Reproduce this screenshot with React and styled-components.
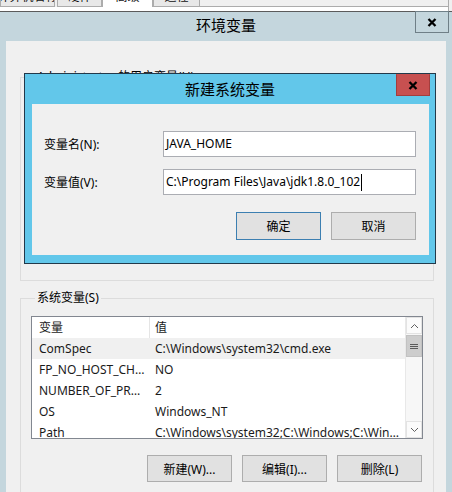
import React from 'react';
import styled, { createGlobalStyle } from 'styled-components';

const GlobalStyle = createGlobalStyle`
  html, body { margin: 0; padding: 0; }
  body {
    width: 452px; height: 492px; overflow: hidden; background: #f0f0f0;
    font-family: "Noto Sans", "Noto Sans CJK SC", sans-serif; font-size: 12px; color: #000;
  }
  * { box-sizing: border-box; }
`;

const Page = styled.div`
  width: 452px; height: 492px; overflow: hidden; position: relative;
  display: flex; flex-direction: column;
`;

const TabStrip = styled.div`
  display: flex; height: 7px; flex-shrink: 0; background: #f0f0f0;
`;

const Tab = styled.div`
  width: ${p => p.w}px; margin-right: ${p => p.gap || 0}px; height: 7px; overflow: hidden;
  background: ${p => (p.active ? '#ffffff' : '#e8e8e8')};
  border: 1px solid #acacac; border-top: none;
  border-bottom: ${p => (p.active ? 'none' : '1px solid #acacac')};
  display: flex; justify-content: center; align-items: flex-start;
`;

const TabLabel = styled.span`
  margin-top: -10px; line-height: 14px; font-size: 12px; color: #111; white-space: nowrap;
`;

const TabFill = styled.div`
  flex: 1; height: 7px; border-bottom: 1px solid #acacac; border-right: 1px solid #acacac; margin-right: 3px;
`;

const TabPanel = styled.div`
  height: 4px; flex-shrink: 0; background: #fff; margin-right: 3px; border-right: 1px solid #acacac;
`;

const Window = styled.div`
  flex: 1; display: flex; flex-direction: column; min-height: 0;
  background: #c4d6dd; border-top: 1px solid #5b5b5b;
`;

const TitleBar = styled.div`
  display: grid; grid-template-columns: 1fr auto 1fr; align-items: start;
  height: ${p => p.h}px; flex-shrink: 0;
`;

const Title = styled.div`
  grid-column: 2; font-size: 15px; line-height: ${p => p.lh}px; color: #000; white-space: nowrap;
`;

const CloseBtn = styled.div`
  grid-column: 3; justify-self: end;
  width: 34px; height: 22px; margin-top: ${p => p.mt || 0}px; margin-right: ${p => p.mr}px;
  display: flex; align-items: center; justify-content: center;
  background: ${p => (p.red ? '#c75050' : 'transparent')};
  border: 1px solid ${p => (p.red ? '#a33d3d' : '#6f7f87')};
  border-top-color: ${p => (p.red ? '#c75050' : '#6f7f87')};
`;

const Client = styled.div`
  flex: 1; min-height: 0; margin: 0 6px; background: #f0f0f0; padding-top: 28px;
  display: flex; flex-direction: column;
`;

const GroupBox = styled.fieldset`
  margin: ${p => p.mt || 0}px 12px 0 14px; border: 1px solid #dcdcdc; min-width: 0;
  padding: 10px 10px 0 10px; height: ${p => p.h}px; flex-shrink: 0;
`;

const Legend = styled.legend`
  margin-left: 4px; padding: 0 2px; font-size: 12px; line-height: 16px; color: #000;
`;

const ListView = styled.div`
  height: 123px; border: 1px solid #828790; background: #fff; display: flex; overflow: hidden;
`;

const ListBody = styled.div`
  flex: 1; min-width: 0; display: flex; flex-direction: column; overflow: hidden;
`;

const Row = styled.div`
  display: grid; grid-template-columns: 118px 1fr; height: 21px; flex-shrink: 0;
  background: ${p => (p.selected ? '#f0f0f0' : '#fff')};
`;

const Cell = styled.div`
  line-height: 21px; white-space: nowrap; overflow: hidden; text-overflow: ellipsis;
  padding-left: ${p => (p.first ? 7 : 5)}px; padding-right: 3px; color: #1a1a1a; font-size: 12px;
  border-right: ${p => (p.sep ? '1px solid #e5e5e5' : 'none')};
`;

const Scrollbar = styled.div`
  width: 17px; flex-shrink: 0; background: #f7f7f7; border-left: 1px solid #e8e8e8;
  display: flex; flex-direction: column;
`;

const ScrollArrow = styled.div`
  height: 17px; flex-shrink: 0; display: flex; align-items: center; justify-content: center;
  background: #fbfbfb; border: 1px solid #e3e3e3;
`;

const Thumb = styled.div`
  height: 22px; margin: 1px 0 0 0; background: #cdcdcd; border: 1px solid #c2c2c2;
  display: flex; align-items: center; justify-content: center; flex-shrink: 0;
`;

const Track = styled.div` flex: 1; `;

const ButtonRow = styled.div`
  display: flex; justify-content: flex-end; gap: ${p => p.gap}px;
  margin-top: ${p => p.mt}px; padding-right: ${p => p.pr || 0}px;
`;

const Button = styled.div`
  width: 85px; height: ${p => p.h || 27}px; background: #e1e1e1;
  border: 1px solid ${p => (p.primary ? '#3c7fb1' : '#adadad')};
  display: flex; align-items: center; justify-content: center; font-size: 12px; color: #000;
`;

const Dialog = styled.div`
  position: absolute; left: 24px; top: 73px; width: 412px; height: 191px;
  background: #62c7ea; border: 1px solid #22394a; display: flex; flex-direction: column;
`;

const DlgClient = styled.div`
  flex: 1; margin: 0 6px 8px 7px; background: #f0f0f0; padding: 27px 13px 0 12px;
  display: flex; flex-direction: column;
`;

const Form = styled.div`
  display: grid; grid-template-columns: 119px 1fr; row-gap: 12px; align-items: center;
`;

const Label = styled.div` font-size: 12px; color: #000; white-space: nowrap; `;

const Input = styled.div`
  height: 26px; border: 1px solid #abadb3; background: #fff; padding: 0 2px;
  line-height: 24px; font-size: 12px; color: #000; white-space: nowrap; overflow: hidden;
`;

const Caret = styled.span`
  display: inline-block; width: 1px; height: 17px; background: #000; vertical-align: middle; margin-left: 1px;
`;

const XIcon = () => (
  <svg width="10" height="9" viewBox="0 0 10 9">
    <path d="M1.5 1 L8.5 8 M8.5 1 L1.5 8" stroke="#000" strokeWidth="2.3" fill="none" />
  </svg>
);

const Chevron = ({ up }) => (
  <svg width="9" height="6" viewBox="0 0 9 6">
    <path d={up ? 'M1 5 L4.5 1.5 L8 5' : 'M1 1 L4.5 4.5 L8 1'} stroke="#606060" strokeWidth="1" fill="none" />
  </svg>
);

const Grip = () => (
  <svg width="8" height="7" viewBox="0 0 8 7">
    <path d="M0 1.5 H8 M0 3.5 H8 M0 5.5 H8" stroke="#5a5a5a" strokeWidth="1" />
  </svg>
);

const rows = [
  ['ComSpec', 'C:\\Windows\\system32\\cmd.exe', true],
  ['FP_NO_HOST_CHECK', 'NO'],
  ['NUMBER_OF_PROCESSORS', '2'],
  ['OS', 'Windows_NT'],
  ['Path', 'C:\\Windows\\system32;C:\\Windows;C:\\Windows\\System32\\Wbem'],
];

export default function App() {
  return (
    <Page>
      <GlobalStyle />
      <TabStrip>
        <Tab w={55} gap={2}><TabLabel>计算机名称</TabLabel></Tab>
        <Tab w={45}><TabLabel>硬件</TabLabel></Tab>
        <Tab w={51} active><TabLabel>高级</TabLabel></Tab>
        <Tab w={47}><TabLabel>远程</TabLabel></Tab>
        <TabFill />
      </TabStrip>
      <TabPanel />
      <Window>
        <TitleBar h={29}>
          <Title lh={27}>环境变量</Title>
          <CloseBtn mt={-1} mr={3}><XIcon /></CloseBtn>
        </TitleBar>
        <Client>
          <GroupBox h={212}>
            <Legend>Administrator 的用户变量(U)</Legend>
          </GroupBox>
          <GroupBox mt={9} h={260}>
            <Legend>系统变量(S)</Legend>
            <ListView>
              <ListBody>
                <Row>
                  <Cell first sep>变量</Cell>
                  <Cell>值</Cell>
                </Row>
                {rows.map(([k, v, sel]) => (
                  <Row key={k} selected={sel}>
                    <Cell first>{k}</Cell>
                    <Cell>{v}</Cell>
                  </Row>
                ))}
              </ListBody>
              <Scrollbar>
                <ScrollArrow><Chevron up /></ScrollArrow>
                <Thumb><Grip /></Thumb>
                <Track />
                <ScrollArrow><Chevron /></ScrollArrow>
              </Scrollbar>
            </ListView>
            <ButtonRow gap={10} mt={16} pr={1}>
              <Button>新建(W)...</Button>
              <Button>编辑(I)...</Button>
              <Button>删除(L)</Button>
            </ButtonRow>
          </GroupBox>
        </Client>
      </Window>
      <Dialog>
        <TitleBar h={30}>
          <Title lh={30}>新建系统变量</Title>
          <CloseBtn red mr={5}><XIcon /></CloseBtn>
        </TitleBar>
        <DlgClient>
          <Form>
            <Label>变量名(N):</Label>
            <Input>JAVA_HOME</Input>
            <Label>变量值(V):</Label>
            <Input>C:\Program Files\Java\jdk1.8.0_102<Caret /></Input>
          </Form>
          <ButtonRow gap={10} mt={17}>
            <Button h={28} primary>确定</Button>
            <Button h={28}>取消</Button>
          </ButtonRow>
        </DlgClient>
      </Dialog>
    </Page>
  );
}
